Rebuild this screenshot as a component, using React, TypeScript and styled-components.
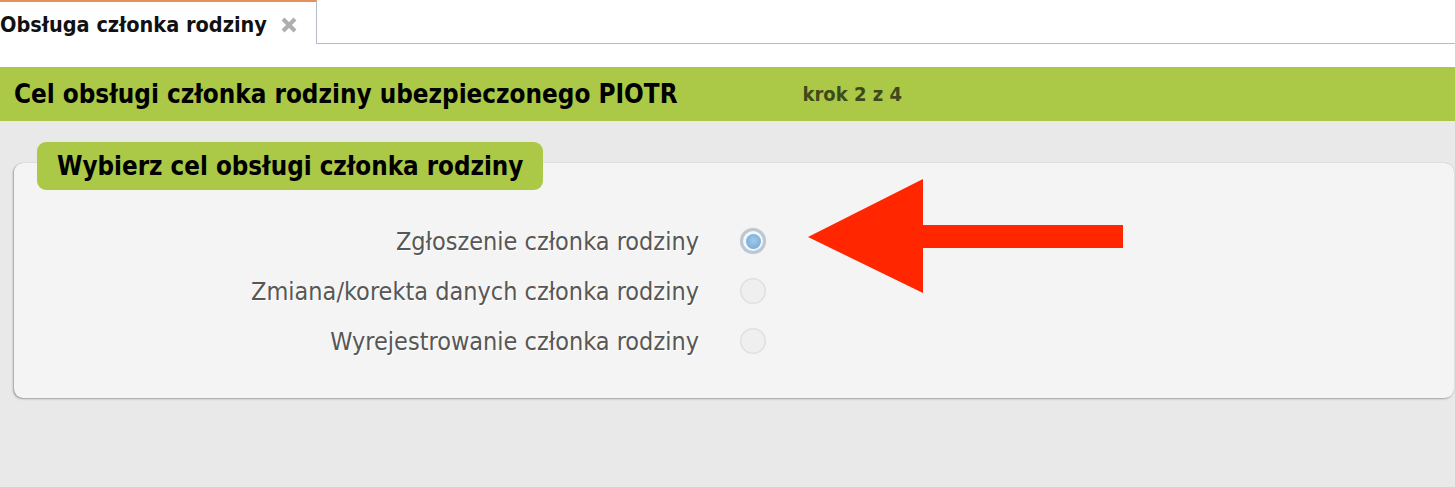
import styled, { createGlobalStyle } from 'styled-components';

const GlobalStyle = createGlobalStyle`
  html, body {
    margin: 0;
    padding: 0;
    background: #e9e9e9;
  }
  * {
    box-sizing: border-box;
  }
`;

const font = `"DejaVu Sans Condensed", "DejaVu Sans", "Liberation Sans", sans-serif`;

const Page = styled.div`
  position: relative;
  min-height: 100vh;
  display: flex;
  flex-direction: column;
  background: #e9e9e9;
  font-family: ${font};
`;

const Top = styled.div`
  background: #fff;
  padding-bottom: 23px;
`;

const TabBar = styled.div`
  height: 44px;
  display: flex;
  align-items: stretch;
  border-bottom: 1px solid #b6bac9;
`;

const Tab = styled.div`
  width: 317px;
  margin-bottom: -1px;
  display: flex;
  align-items: center;
  gap: 13px;
  background: #fff;
  border-top: 2px solid #e39257;
  border-right: 1px solid #b6bac9;
`;

const TabTitle = styled.span`
  font-weight: bold;
  font-size: 21.5px;
  color: #111;
  margin-top: 2px;
  white-space: nowrap;
`;

const CloseIcon = styled.svg`
  width: 18px;
  height: 16px;
  flex: none;
  margin-top: 4px;
  filter: blur(0.5px);
`;

const Header = styled.div`
  height: 54px;
  display: flex;
  align-items: center;
  padding: 0 14px;
  background: #abc846;
`;

const HeaderTitle = styled.h1`
  margin: 0;
  font-size: 25.8px;
  font-weight: bold;
  color: #000;
  white-space: nowrap;
`;

const Step = styled.span`
  margin-left: 125px;
  font-size: 20px;
  font-weight: bold;
  color: #3e4a1b;
  white-space: nowrap;
`;

const Content = styled.div`
  padding: 42px 1px 0 14px;
`;

const Panel = styled.section`
  height: 235px;
  display: flex;
  flex-direction: column;
  background: #f4f4f4;
  border-radius: 9px;
  box-shadow: -1px 1px 2px rgba(0, 0, 0, 0.3), 0 0 1px rgba(0, 0, 0, 0.25);
`;

const Legend = styled.h2`
  align-self: flex-start;
  margin: -21px 0 0 23px;
  height: 48px;
  padding: 0 20px;
  line-height: 48px;
  font-size: 25.7px;
  font-weight: bold;
  color: #000;
  background: #abc846;
  border-radius: 9px;
  white-space: nowrap;
`;

const OptionList = styled.div`
  margin-top: 26px;
  display: grid;
  grid-template-columns: 685px 26px;
  grid-auto-rows: 50px;
  column-gap: 41px;
  align-items: center;
`;

const OptionLabel = styled.label`
  text-align: right;
  font-size: 25px;
  color: #575757;
  text-shadow: 1px 1px 0 #fff;
  white-space: nowrap;
`;

const Radio = styled.span<{ $checked?: boolean }>`
  width: 26px;
  height: 26px;
  border-radius: 50%;
  display: flex;
  align-items: center;
  justify-content: center;
  background: ${(p) => (p.$checked ? '#f4f6f8' : '#efefef')};
  box-shadow: ${(p) =>
    p.$checked
      ? 'inset 0 0 0 3px #bcc7d3, 0 0 1px #d0d6dc'
      : 'inset 0 0 0 1.5px #e0e0e0'};

  &::after {
    content: '';
    display: ${(p) => (p.$checked ? 'block' : 'none')};
    width: 15px;
    height: 15px;
    border-radius: 50%;
    background: radial-gradient(circle at 50% 45%, #a3c9e9 0%, #89b9e1 45%, #6aa3d4 100%);
  }
`;

const Arrow = styled.svg`
  position: absolute;
  left: 808px;
  top: 179px;
  width: 315px;
  height: 114px;
`;

const options = [
  { label: 'Zgłoszenie członka rodziny', checked: true },
  { label: 'Zmiana/korekta danych członka rodziny', checked: false },
  { label: 'Wyrejestrowanie członka rodziny', checked: false },
];

export default function App() {
  return (
    <>
      <GlobalStyle />
      <Page>
        <Top>
          <TabBar>
            <Tab>
              <TabTitle>Obsługa członka rodziny</TabTitle>
              <CloseIcon viewBox="0 0 18 16">
                <path d="M3 2 L15 14 M15 2 L3 14" stroke="#aeaeae" strokeWidth="4" />
              </CloseIcon>
            </Tab>
          </TabBar>
        </Top>
        <Header>
          <HeaderTitle>Cel obsługi członka rodziny ubezpieczonego PIOTR</HeaderTitle>
          <Step>krok 2 z 4</Step>
        </Header>
        <Content>
          <Panel>
            <Legend>Wybierz cel obsługi członka rodziny</Legend>
            <OptionList>
              {options.map((o) => [
                <OptionLabel key={o.label}>{o.label}</OptionLabel>,
                <Radio key={o.label + '-r'} $checked={o.checked} />,
              ])}
            </OptionList>
          </Panel>
        </Content>
        <Arrow viewBox="0 0 315 114">
          <polygon
            points="0,58 115,0 115,46 315,46 315,69 115,69 115,114"
            fill="#ff2600"
          />
        </Arrow>
      </Page>
    </>
  );
}
